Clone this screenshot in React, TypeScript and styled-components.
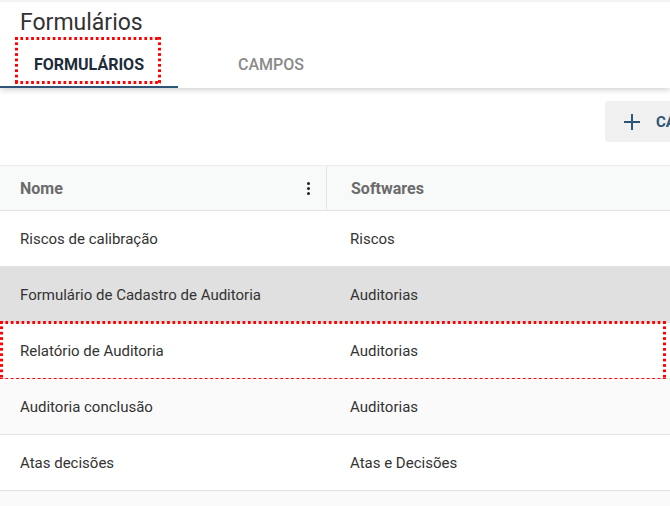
import React from "react";
import styled, { createGlobalStyle } from "styled-components";

const Global = createGlobalStyle`
  html, body { margin: 0; padding: 0; background: #ffffff; overflow: hidden; }
  body { font-family: Roboto, "Liberation Sans", sans-serif; }
`;

const Page = styled.div`
  width: 670px;
  height: 506px;
  overflow: hidden;
  background: #ffffff;
`;

const Header = styled.header`
  background: #fff;
  box-shadow: 0 2px 6px rgba(0, 0, 0, 0.18);
  position: relative;
  z-index: 1;
  border-top: 2px solid #f3f3f3;
`;

const Title = styled.h1`
  margin: 0;
  padding: 7px 0 0 20px;
  font-size: 23px;
  line-height: 28px;
  font-weight: 400;
  color: #333;
`;

const Tabs = styled.div`
  display: flex;
  margin-top: 3px;
`;

const Tab = styled.div<{ $active?: boolean }>`
  position: relative;
  width: 178px;
  height: 48px;
  box-sizing: border-box;
  display: flex;
  align-items: center;
  justify-content: center;
  padding-top: 2px;
  margin-right: 4px;
  font-size: 16px;
  font-weight: ${(p) => (p.$active ? 700 : 500)};
  color: ${(p) => (p.$active ? "#1d2b3a" : "#8a8a8a")};
  border-bottom: 2px solid ${(p) => (p.$active ? "#2e5478" : "transparent")};
  text-transform: uppercase;
`;

const Highlight = styled.span<{ $l: number; $t: number; $r: number; $b: number }>`
  position: absolute;
  left: ${(p) => p.$l}px;
  top: ${(p) => p.$t}px;
  right: ${(p) => p.$r}px;
  bottom: ${(p) => p.$b}px;
  pointer-events: none;
  background-image:
    linear-gradient(to right, #ff0000 3px, transparent 3px),
    linear-gradient(to right, #ff0000 3px, transparent 3px),
    linear-gradient(to bottom, #ff0000 3px, transparent 3px),
    linear-gradient(to bottom, #ff0000 3px, transparent 3px);
  background-size: 5.4px 3px, 5.4px 3px, 3px 5.4px, 3px 5.4px;
  background-position: left top, left bottom, left top, right top;
  background-repeat: repeat-x, repeat-x, repeat-y, repeat-y;
`;

const Toolbar = styled.div`
  display: flex;
  padding: 13px 0 23px 605px;
`;

const AddButton = styled.button`
  display: flex;
  align-items: center;
  gap: 15px;
  height: 41px;
  padding: 0 0 0 18px;
  min-width: 160px;
  border: none;
  border-radius: 4px;
  background: #f0f0f0;
  color: #2e5478;
  font-family: Roboto, "Liberation Sans", sans-serif;
  font-size: 15px;
  font-weight: 700;
  flex-shrink: 0;
  white-space: nowrap;
`;

const Table = styled.div`
  border-top: 1px solid #ececec;
`;

const Row = styled.div<{ $bg?: string; $head?: boolean }>`
  position: relative;
  display: grid;
  grid-template-columns: 326px 1fr;
  height: ${(p) => (p.$head ? 44 : 55)}px;
  background: ${(p) => p.$bg || "#fff"};
  border-bottom: 1px solid #e2e2e2;
`;

const Cell = styled.div<{ $head?: boolean; $second?: boolean }>`
  display: flex;
  align-items: center;
  justify-content: space-between;
  padding-left: ${(p) => (p.$second ? 24 : 20)}px;
  padding-right: 15px;
  font-size: ${(p) => (p.$head ? 16 : 15)}px;
  font-weight: ${(p) => (p.$head ? 700 : 400)};
  color: ${(p) => (p.$head ? "#6b6b6b" : "#333")};
  border-left: ${(p) => (p.$head && p.$second ? "1px solid #e4e4e4" : "none")};
`;

const Kebab = styled.span`
  display: flex;
  flex-direction: column;
  gap: 2px;
  margin-right: 1px;
  & > i {
    width: 3px;
    height: 3px;
    border-radius: 50%;
    background: #222;
  }
`;

const rows = [
  { name: "Riscos de calibração", sw: "Riscos", bg: "#ffffff" },
  { name: "Formulário de Cadastro de Auditoria", sw: "Auditorias", bg: "#e0e0e0" },
  { name: "Relatório de Auditoria", sw: "Auditorias", bg: "#ffffff", mark: true },
  { name: "Auditoria conclusão", sw: "Auditorias", bg: "#fafafa" },
  { name: "Atas decisões", sw: "Atas e Decisões", bg: "#ffffff" },
];

export default function App() {
  return (
    <Page>
      <Global />
      <Header>
        <Title>Formulários</Title>
        <Tabs>
          <Tab $active>
            Formulários
            <Highlight $l={15} $t={-3} $r={17} $b={2} />
          </Tab>
          <Tab>Campos</Tab>
        </Tabs>
      </Header>
      <Toolbar>
        <AddButton>
          <svg width="18" height="18" viewBox="0 0 18 18">
            <path d="M9 1v16M1 9h16" stroke="#2e5478" strokeWidth="2" fill="none" />
          </svg>
          CADASTRAR
        </AddButton>
      </Toolbar>
      <Table>
        <Row $head $bg="#f8f9f9">
          <Cell $head>
            Nome
            <Kebab>
              <i />
              <i />
              <i />
            </Kebab>
          </Cell>
          <Cell $head $second>
            Softwares
          </Cell>
        </Row>
        {rows.map((r) => (
          <Row key={r.name} $bg={r.bg}>
            <Cell>{r.name}</Cell>
            <Cell $second>{r.sw}</Cell>
            {r.mark && <Highlight $l={0} $t={-2} $r={4} $b={-3} />}
          </Row>
        ))}
        <Row $bg="#fafafa" />
      </Table>
    </Page>
  );
}
